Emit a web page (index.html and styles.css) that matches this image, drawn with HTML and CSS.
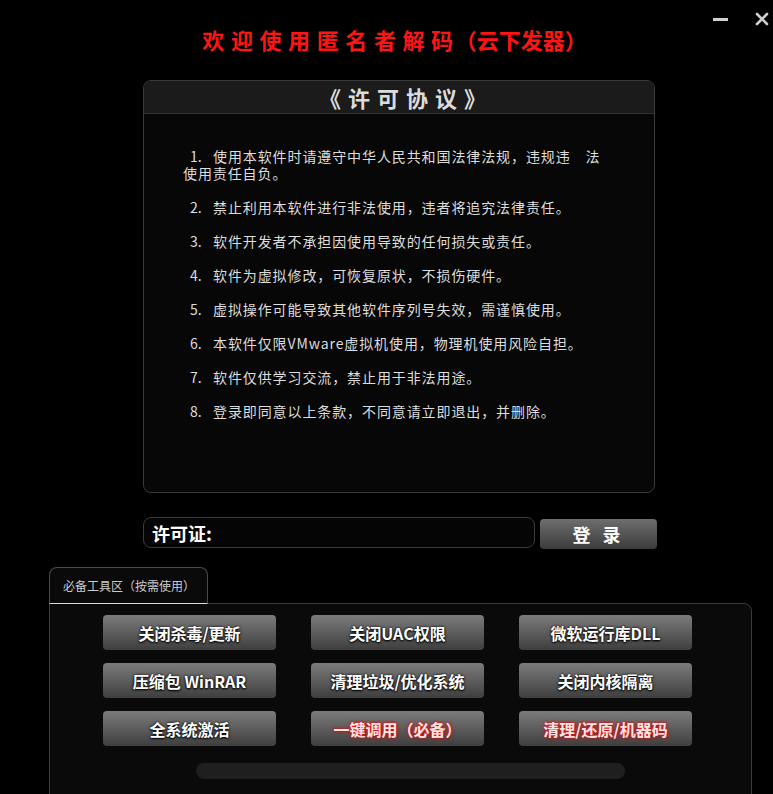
FILE: index.html
```html
<!DOCTYPE html>
<html lang="zh-CN">
<head>
    <meta charset="UTF-8">
    <meta name="viewport" content="width=device-width, initial-scale=1.0">
    <title>匿名者解码</title>
    <link rel="stylesheet" href="styles.css">
</head>
<body>

<div class="window">
    <div class="win-controls">
        <svg class="win-btn" width="16" height="16" viewBox="0 0 16 16">
            <rect x="0" y="8" width="15" height="3" fill="#cfcfcf"/>
        </svg>
        <svg class="win-btn" width="14" height="14" viewBox="0 0 14 14">
            <path d="M2 2 L12 12 M12 2 L2 12" stroke="#cfcfcf" stroke-width="2.6" stroke-linecap="round"/>
        </svg>
    </div>

    <h1 class="title">欢迎使用匿名者解码<span class="title-tail">（云下发器）</span></h1>

    <section class="license">
        <div class="license-head">《许可协议》</div>
        <ol class="terms">
            <li><span class="num">1.</span>使用本软件时请遵守中华人民共和国法律法规，违规违　法<br>使用责任自负。</li>
            <li><span class="num">2.</span>禁止利用本软件进行非法使用，违者将追究法律责任。</li>
            <li><span class="num">3.</span>软件开发者不承担因使用导致的任何损失或责任。</li>
            <li><span class="num">4.</span>软件为虚拟修改，可恢复原状，不损伤硬件。</li>
            <li><span class="num">5.</span>虚拟操作可能导致其他软件序列号失效，需谨慎使用。</li>
            <li><span class="num">6.</span>本软件仅限VMware虚拟机使用，物理机使用风险自担。</li>
            <li><span class="num">7.</span>软件仅供学习交流，禁止用于非法用途。</li>
            <li><span class="num">8.</span>登录即同意以上条款，不同意请立即退出，并删除。</li>
        </ol>
    </section>

    <form class="login-row" id="loginForm">
        <label class="key-field">
            <span class="key-label">许可证:</span>
            <input type="text" class="key-input" name="key">
        </label>
        <button type="submit" class="login-btn">登 录</button>
    </form>

    <div class="tools">
        <div class="tab">必备工具区（按需使用）</div>
        <div class="panel">
            <div class="tool-grid">
                <button class="tool-btn">关闭杀毒/更新</button>
                <button class="tool-btn">关闭UAC权限</button>
                <button class="tool-btn">微软运行库DLL</button>
                <button class="tool-btn">压缩包 WinRAR</button>
                <button class="tool-btn">清理垃圾/优化系统</button>
                <button class="tool-btn">关闭内核隔离</button>
                <button class="tool-btn">全系统激活</button>
                <button class="tool-btn tool-btn-red">一键调用（必备）</button>
                <button class="tool-btn tool-btn-red">清理/还原/机器码</button>
            </div>
            <div class="progress"></div>
        </div>
    </div>
</div>

</body>
</html>
```

FILE: styles.css
```css
body {
    margin: 0;
    background-color: #000;
    font-family: "Noto Sans CJK SC", "Noto Sans", sans-serif;
    color: #ddd;
}
.window {
    position: relative;
    width: 773px;
    height: 794px;
    overflow: hidden;
    background-color: #000;
}
.win-controls {
    position: absolute;
    top: 10px;
    right: 4px;
    display: flex;
    gap: 26px;
    align-items: flex-start;
}
.win-btn {
    display: block;
}
.win-controls .win-btn:last-child {
    margin-top: 2px;
}
.title {
    margin: 0;
    padding: 24px 0 0 16px;
    text-align: center;
    font-size: 22px;
    line-height: 30px;
    font-weight: bold;
    color: #ff1414;
    letter-spacing: 6.6px;
}
.title-tail {
    letter-spacing: 0;
    margin-left: -5px;
}
.license {
    width: 510px;
    height: 411px;
    margin: 26px 0 0 143px;
    border: 1px solid #3a3a3a;
    border-radius: 8px;
    background-color: #070707;
    overflow: hidden;
}
.license-head {
    height: 32px;
    line-height: 32px;
    padding-left: 14px;
    text-align: center;
    font-size: 22px;
    font-weight: bold;
    letter-spacing: 7px;
    color: #dcdcdc;
    background-color: #1b1b1b;
    border-bottom: 1px solid #333;
}
.terms {
    list-style: none;
    margin: 0;
    padding: 34px 0 0 39px;
    font-size: 14px;
    line-height: 17px;
    letter-spacing: 0.9px;
}
.terms li {
    margin-bottom: 17px;
}
.num {
    display: inline-block;
    width: 23px;
    margin-left: 7px;
    letter-spacing: 0;
}
.login-row {
    display: flex;
    align-items: flex-start;
    gap: 5px;
    margin: 24px 0 0 143px;
}
.key-field {
    display: flex;
    align-items: center;
    width: 382px;
    height: 29px;
    padding-left: 8px;
    border: 1px solid #3a3a3a;
    border-radius: 8px;
    background-color: #050505;
}
.key-label {
    font-size: 18px;
    font-weight: bold;
    color: #fff;
    white-space: nowrap;
}
.key-input {
    flex: 1;
    min-width: 0;
    height: 26px;
    border: none;
    background: transparent;
    color: #fff;
    outline: none;
}
.login-btn {
    width: 117px;
    height: 30px;
    margin-top: 2px;
    padding: 0;
    border: none;
    border-radius: 4px;
    background: linear-gradient(#6e6e6e, #3c3c3c);
    color: #fff;
    font-family: inherit;
    font-size: 18px;
    font-weight: bold;
    letter-spacing: 4px;
    line-height: 30px;
    cursor: pointer;
}
.tools {
    margin: 18px 0 0 49px;
}
.tab {
    position: relative;
    z-index: 1;
    width: 157px;
    height: 35px;
    line-height: 36px;
    margin-bottom: -1px;
    border: 1px solid #4a4a4a;
    border-bottom: 1px solid #dfe8a0;
    border-radius: 8px 8px 0 0;
    background-color: #0a0a0a;
    font-size: 12px;
    color: #ccc;
    text-indent: 13px;
}
.panel {
    width: 703px;
    height: 194px;
    padding: 11px 0 0 53px;
    box-sizing: border-box;
    border: 1px solid #3a3a3a;
    border-radius: 0 8px 0 0;
    background-color: #0a0a0a;
}
.tool-grid {
    display: grid;
    grid-template-columns: repeat(3, 173px);
    grid-auto-rows: 35px;
    column-gap: 35px;
    row-gap: 13px;
}
.tool-btn {
    padding: 0;
    border: none;
    border-radius: 4px;
    background: linear-gradient(#7c7c7c, #3e3e3e);
    color: #fff;
    font-family: inherit;
    font-size: 16px;
    font-weight: bold;
    text-shadow: 0 1px 2px #000, 0 0 3px #000;
    cursor: pointer;
}
.tool-btn-red {
    color: #ffe4e4;
    text-shadow: 0 0 2px #ff0000, 0 0 4px #d00000;
}
.progress {
    width: 429px;
    height: 16px;
    margin: 17px 0 0 93px;
    border-radius: 8px;
    background-color: #1f1f1f;
}
```
